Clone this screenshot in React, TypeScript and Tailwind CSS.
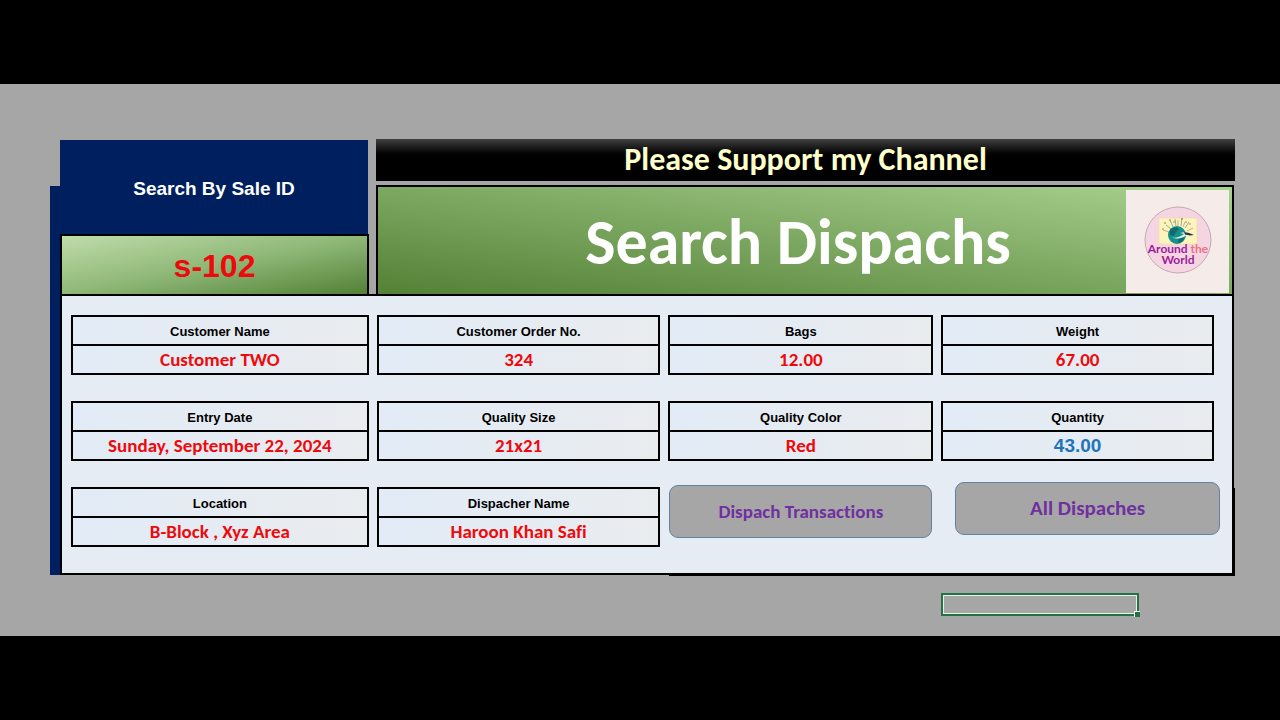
import React from 'react';

interface Field {
  label: string;
  value: string;
  tone?: 'red' | 'blue';
}

const FIELDS: Field[] = [
  { label: 'Customer Name', value: 'Customer TWO' },
  { label: 'Customer Order No.', value: '324' },
  { label: 'Bags', value: '12.00' },
  { label: 'Weight', value: '67.00' },
  { label: 'Entry Date', value: 'Sunday, September 22, 2024' },
  { label: 'Quality Size', value: '21x21' },
  { label: 'Quality Color', value: 'Red' },
  { label: 'Quantity', value: '43.00', tone: 'blue' },
  { label: 'Location', value: 'B-Block , Xyz Area' },
  { label: 'Dispacher Name', value: 'Haroon Khan Safi' },
];

const FieldCard: React.FC<Field> = ({ label, value, tone = 'red' }) => (
  <dl className="h-[60px] border-2 border-black bg-linear-to-r from-[#e2ebf6] to-[#e9ecef] flex flex-col text-center font-bold">
    <dt className="flex-1 flex items-center justify-center pt-px border-b-2 border-black text-[13px] leading-none text-black font-['Liberation_Sans',sans-serif]">
      {label}
    </dt>
    {tone === 'blue' ? (
      <dd className="h-[27px] flex items-center justify-center text-[19px] leading-none text-[#1f74bd] font-['Liberation_Sans',sans-serif]">
        {value}
      </dd>
    ) : (
      <dd className="h-[27px] flex items-center justify-center text-[19px] leading-none text-[#ee0a0c] font-[Carlito,Lato,sans-serif]">
        {value}
      </dd>
    )}
  </dl>
);

const ChannelLogo = () => (
  <svg viewBox="0 0 103 103" className="w-[103px] h-[103px] shrink-0" role="img" aria-label="Around the World">
    <defs>
      <linearGradient id="logoWord" x1="0" y1="0" x2="0" y2="1">
        <stop offset="0" stopColor="#b01474" />
        <stop offset="1" stopColor="#8a22b0" />
      </linearGradient>
    </defs>
    <rect width="103" height="103" fill="#f5ece9" />
    <circle cx="52" cy="50" r="33" fill="#f6d5e2" stroke="#b59aa8" strokeWidth="0.8" />
    <rect x="33" y="28" width="38" height="26" fill="#fbf5bd" stroke="#e9d9a6" strokeWidth="0.6" />
    <g strokeWidth="0.8" fill="none" opacity="0.75">
      <path d="M45 39l-5-4M47 37l-3-7M50 36l-1-7M55 36l1-8M59 38l4-6" stroke="#4f7f79" />
      <path d="M43 42l-6-2M52 36v-6M57 37l2-5M61 41l6-3" stroke="#c4735b" />
    </g>
    <g fill="#b5544b">
      <circle cx="39" cy="33" r="0.8" />
      <circle cx="44" cy="30" r="0.7" />
      <circle cx="56" cy="29" r="0.8" />
      <circle cx="64" cy="34" r="0.7" />
      <circle cx="37" cy="39" r="0.7" />
      <circle cx="48" cy="32" r="0.7" />
      <circle cx="60" cy="32" r="0.7" />
    </g>
    <circle cx="51" cy="45" r="9" fill="#16908c" />
    <path d="M44 40c3-3 7-3 9-1l-3 3-2 4-4-1zM53 48l4-2 1 3-3 3-3 1z" fill="#126a70" />
    <path d="M46 47c4 2 9-1 12-3l-4-1 5-1 7 2-5 1c-4 3-10 5-15 2z" fill="#d8efe4" />
    <path d="M58 42l5 1 5 2-4 .5-5-1z" fill="#26323f" />
    <g className="text-[12px] font-bold font-[Lato,sans-serif]" textAnchor="middle">
      <text x="52" y="63">
        <tspan fill="url(#logoWord)">Around</tspan>
        <tspan fill="#f0717f"> the</tspan>
      </text>
      <text x="52" y="74" fill="url(#logoWord)">World</text>
    </g>
  </svg>
);

const BUTTON =
  "h-[53px] rounded-[9px] border border-[#5f83a5] bg-[#a6a6a6] font-bold leading-none text-[#7030a0] font-[Carlito,Lato,sans-serif]";

export default function App() {
  return (
    <div className="min-h-screen flex flex-col bg-black [font-variant-ligatures:none]">
      <main className="mt-[84px] mb-[84px] flex-1 bg-[#a6a6a6] pt-[55px] pl-[50px] pr-[46px]">
        <div className="flex">
          <div className="w-[10px] shrink-0 mt-[47px] bg-[#001f5f]" />

          <div className="flex-1 min-w-0">
            {/* Header */}
            <div className="flex gap-[7px]">
              <div className="w-[309px] shrink-0 flex flex-col pt-px">
                <label
                  htmlFor="sale-id"
                  className="h-[94px] mr-px flex items-center justify-center pt-0.5 bg-[#001f5f] text-[19px] leading-none font-bold text-white font-['Liberation_Sans',sans-serif]"
                >
                  Search By Sale ID
                </label>
                <input
                  id="sale-id"
                  defaultValue="s-102"
                  className="w-full h-[60px] pt-0.5 border-2 border-b-0 border-black bg-linear-to-br from-[#c0dcac] via-[#8fb877] to-[#538135] text-center text-[32px] leading-none font-bold text-[#ee0a0c] outline-none font-['Liberation_Sans',sans-serif]"
                />
              </div>

              <div className="flex-1 min-w-0 flex flex-col gap-1">
                <div className="h-[42px] -mr-px flex items-center justify-center bg-linear-to-b from-[#414141] to-black to-50% text-[32px] leading-none font-bold text-[#ffffcc] font-[Carlito,Lato,sans-serif]">
                  Please Support my Channel
                </div>
                <div className="h-[109px] flex items-center border-2 border-b-0 border-black bg-linear-to-tr from-[#538135] via-[#7da862] to-[#a9d18e] pt-0.5 pr-[3px]">
                  <h1 className="flex-1 pl-[92px] text-center text-[64px] leading-none font-bold text-white font-[Carlito,Lato,sans-serif]">
                    Search Dispachs
                  </h1>
                  <ChannelLogo />
                </div>
              </div>
            </div>

            {/* Record details */}
            <section className="relative border-2 border-black bg-[#e6ecf3] pt-[19px] pb-[26px] pl-[9px] pr-[18px]">
              <div className="grid grid-cols-[298fr_284fr_265fr_273fr] gap-x-2 gap-y-[26px]">
                {FIELDS.map((field) => (
                  <FieldCard key={field.label} {...field} />
                ))}
                <button type="button" className={`${BUTTON} -mt-[2px] mx-px text-[19px]`}>
                  Dispach Transactions
                </button>
                <button type="button" className={`${BUTTON} -mt-[5px] ml-[14px] -mr-[6px] text-[21px]`}>
                  All Dispaches
                </button>
              </div>
              {/* heavier outline at the bottom right corner */}
              <div className="absolute -right-[3px] -bottom-[3px] w-[566px] h-[88px] border-r-2 border-b-2 border-black pointer-events-none" />
            </section>
          </div>
        </div>

        {/* Active cell */}
        <div className="flex justify-end mt-[18px] pr-[95px]">
          <div className="relative w-[198px] h-[23px] border-2 border-[#217346]">
            <input
              aria-label="Active cell"
              className="block w-full h-full border border-[#e6f2ea] bg-[#a6a6a6] outline-none"
            />
            <span className="absolute -right-[3px] -bottom-[3px] w-[6px] h-[6px] border-t border-l border-white bg-[#217346]" />
          </div>
        </div>
      </main>
    </div>
  );
}
